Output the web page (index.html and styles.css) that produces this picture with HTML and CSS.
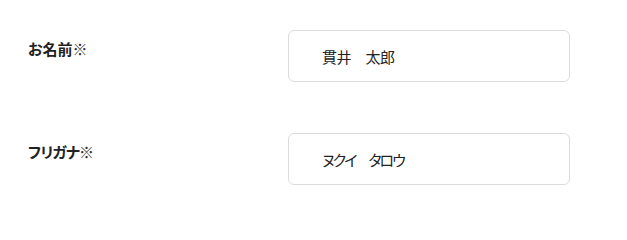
FILE: index.html
```html
<!DOCTYPE html>
<html lang="ja">
<head>
<meta charset="utf-8">
<link rel="stylesheet" href="styles.css">
</head>
<body>
<form class="form">
  <div class="row">
    <label class="label" for="name">お名前<span class="req">※</span></label>
    <input class="field" id="name" type="text" value="貫井　太郎">
  </div>
  <div class="row">
    <label class="label label-kana" for="kana">フリガナ<span class="req">※</span></label>
    <input class="field field-kana" id="kana" type="text" value="ヌクイ　タロウ">
  </div>
</form>
</body>
</html>
```
FILE: styles.css
```css
html, body {
  margin: 0;
  padding: 0;
  background: #fff;
}
body {
  font-family: "Noto Sans CJK JP", "Noto Sans", sans-serif;
  color: #222;
}
.form {
  display: flex;
  flex-direction: column;
  gap: 51px;
  padding: 30px 0 0 28px;
}
.row {
  display: flex;
  align-items: flex-start;
}
.label {
  width: 260px;
  flex: none;
  font-size: 15px;
  font-weight: bold;
  line-height: 22px;
  padding-top: 8px;
  color: #222;
  font-feature-settings: "palt";
}
.label-kana {
  letter-spacing: -0.8px;
}
.req {
  font-weight: normal;
  color: #333;
  letter-spacing: 0;
}
.field {
  box-sizing: border-box;
  width: 282px;
  height: 52px;
  margin: 0;
  padding: 0 20px 0 33px;
  border: 1px solid #dcdcdc;
  border-radius: 6px;
  background: #fff;
  font-family: "Noto Sans CJK JP", "Noto Sans", sans-serif;
  font-size: 15px;
  color: #222;
  outline: none;
  font-feature-settings: "palt";
  letter-spacing: -0.5px;
}
.field-kana {
  letter-spacing: -2px;
}
```
